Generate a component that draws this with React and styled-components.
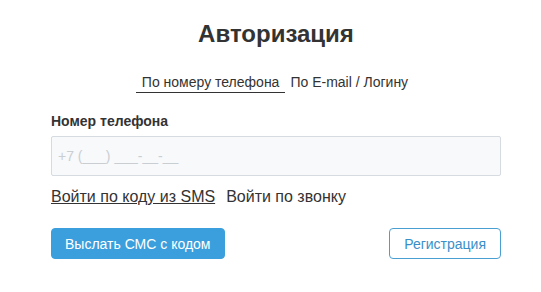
import React from "react";
import styled, { createGlobalStyle } from "styled-components";

const Global = createGlobalStyle`
  html, body { margin: 0; padding: 0; background: #fff; }
  body { font-family: "Liberation Sans", Arial, sans-serif; color: #333; }
`;

const Wrap = styled.div`
  width: 450px;
  margin-left: 51px;
  padding-top: 19px;
  display: flex;
  flex-direction: column;
`;

const Title = styled.h1`
  margin: 0;
  text-align: center;
  font-size: 24px;
  font-weight: 700;
  color: #333;
  line-height: 30px;
`;

const Tabs = styled.div`
  display: flex;
  justify-content: center;
  gap: 5px;
  margin-top: 24px;
  margin-right: 8px;
`;

const Tab = styled.div`
  font-size: 14px;
  line-height: 18px;
  padding: 0 6px 1px;
  color: #333;
  border-bottom: 1px solid ${(p) => (p.$active ? "#333" : "transparent")};
  ${(p) => (p.$active ? "" : "padding: 0 0 1px;")}
`;

const Label = styled.label`
  margin-top: 20px;
  font-size: 14px;
  font-weight: 700;
  line-height: 17px;
  color: #333;
`;

const Input = styled.input`
  margin-top: 6px;
  box-sizing: border-box;
  width: 450px;
  height: 40px;
  border: 1px solid #d5dbe1;
  border-radius: 2px;
  background: #f7f9fb;
  padding: 0 6px;
  font-family: "Liberation Sans", Arial, sans-serif;
  font-size: 14px;
  outline: none;
  &::placeholder { color: #c9ced3; }
`;

const Links = styled.div`
  display: flex;
  gap: 11px;
  margin-top: 11px;
  font-size: 16px;
  line-height: 20px;
`;

const LinkText = styled.span`
  color: #333;
  text-decoration: ${(p) => (p.$active ? "underline" : "none")};
`;

const Actions = styled.div`
  display: flex;
  justify-content: space-between;
  margin-top: 21px;
`;

const Button = styled.button`
  box-sizing: border-box;
  height: 31px;
  padding: 0 ${(p) => (p.$outline ? "14px" : "13px")};
  border-radius: 4px;
  font-family: "Liberation Sans", Arial, sans-serif;
  font-size: 14px;
  cursor: pointer;
  background: ${(p) => (p.$outline ? "#fff" : "#3a9fdc")};
  color: ${(p) => (p.$outline ? "#3a8fc9" : "#fff")};
  border: 1px solid ${(p) => (p.$outline ? "#4a9fd2" : "#3a9fdc")};
`;

export default function App() {
  return (
    <>
      <Global />
      <Wrap>
        <Title>Авторизация</Title>
        <Tabs>
          <Tab $active>По номеру телефона</Tab>
          <Tab>По E-mail / Логину</Tab>
        </Tabs>
        <Label>Номер телефона</Label>
        <Input placeholder="+7 (___) ___-__-__" />
        <Links>
          <LinkText $active>Войти по коду из SMS</LinkText>
          <LinkText>Войти по звонку</LinkText>
        </Links>
        <Actions>
          <Button>Выслать СМС с кодом</Button>
          <Button $outline>Регистрация</Button>
        </Actions>
      </Wrap>
    </>
  );
}
